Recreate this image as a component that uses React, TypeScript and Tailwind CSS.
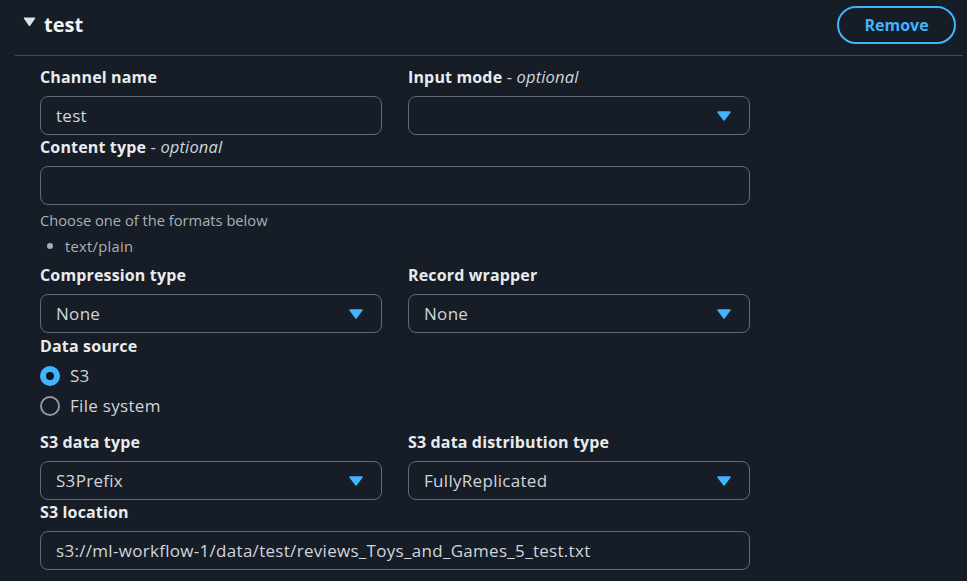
import React from 'react';

type Option = { value: string };

function Label({ text, optional }: { text: string; optional?: boolean }) {
    return (
        <div className="h-[22px] text-[16px] leading-[22px] font-bold tracking-[0.15px] text-[#e9ebed]">
            {text}
            {optional && (
                <span className="text-[16.5px] font-normal text-[#d1d5db]">
                    {' - '}
                    <i>optional</i>
                </span>
            )}
        </div>
    );
}

function Caret() {
    return (
        <svg width="14" height="10" viewBox="0 0 14 10" className="shrink-0">
            <path d="M1 1 L13 1 L7 9 Z" fill="#42b4ff" stroke="#42b4ff" strokeWidth="1.5" strokeLinejoin="round" />
        </svg>
    );
}

function TextInput({ value }: { value?: string }) {
    return (
        <div className="mt-[8px] flex h-[39px] items-center rounded-[8px] border border-[#5f6b7a] px-[15px] text-[17px] tracking-[0.3px] text-[#d1d5db]">
            {value}
        </div>
    );
}

function Select({ value }: { value?: string }) {
    return (
        <div className="mt-[8px] flex h-[39px] items-center justify-between rounded-[8px] border border-[#5f6b7a] pl-[15px] pr-[18px] text-[17px] tracking-[0.3px] text-[#d1d5db]">
            <span>{value}</span>
            <Caret />
        </div>
    );
}

function Radio({ label, checked }: { label: string; checked?: boolean }) {
    return (
        <div className="flex h-[30px] items-center gap-[10px]">
            {checked ? (
                <span className="flex h-[20px] w-[20px] items-center justify-center rounded-full bg-[#42b4ff]">
                    <span className="h-[8px] w-[8px] rounded-full bg-[#0f141a]" />
                </span>
            ) : (
                <span className="h-[20px] w-[20px] rounded-full border-2 border-[#8d99a8]" />
            )}
            <span className="text-[17px] tracking-[0.3px] text-[#d1d5db]">{label}</span>
        </div>
    );
}

const formats: Option[] = [{ value: 'text/plain' }];

export default function App() {
    return (
        <div
            className="min-h-screen w-full bg-[#161d26]"
            style={{ fontFamily: '"Open Sans", "Noto Sans", sans-serif' }}
        >
            <div className="flex items-center justify-between pl-[23px] pr-[11px] pt-[6px]">
                <div className="flex items-center gap-[8px]">
                    <svg width="13" height="10" viewBox="0 0 13 10" className="-mt-[6px]">
                        <path d="M1 1 L12 1 L6.5 9 Z" fill="#dfe3e8" stroke="#dfe3e8" strokeWidth="1" strokeLinejoin="round" />
                    </svg>
                    <h2 className="text-[20px] font-bold leading-[38px] text-[#f3f4f6]">test</h2>
                </div>
                <button className="h-[38px] w-[119px] rounded-full border-2 border-[#42b4ff] text-[16px] font-bold text-[#42b4ff]">
                    Remove
                </button>
            </div>

            <div className="ml-[15px] mr-[4px] mt-[11px] h-px bg-[#414d5c]" />

            <div className="w-[750px] pl-[40px] pt-[10px]">
                <div className="grid grid-cols-2 gap-x-[26px]">
                    <div>
                        <Label text="Channel name" />
                        <TextInput value="test" />
                    </div>
                    <div>
                        <Label text="Input mode" optional />
                        <Select />
                    </div>
                </div>

                <div className="mt-[1px]">
                    <Label text="Content type" optional />
                    <TextInput />
                    <div className="mt-[5px] text-[14.7px] leading-[20px] text-[#a9b0b9]">Choose one of the formats below</div>
                    <ul className="mt-[6px]">
                        {formats.map((f) => (
                            <li key={f.value} className="flex items-center text-[14.7px] leading-[20px] tracking-[0.3px] text-[#a9b0b9]">
                                <span className="ml-[7px] mr-[12px] h-[6px] w-[6px] rounded-full bg-[#a9b0b9]" />
                                {f.value}
                            </li>
                        ))}
                    </ul>
                </div>

                <div className="mt-[8px] grid grid-cols-2 gap-x-[26px]">
                    <div>
                        <Label text="Compression type" />
                        <Select value="None" />
                    </div>
                    <div>
                        <Label text="Record wrapper" />
                        <Select value="None" />
                    </div>
                </div>

                <div className="mt-[2px]">
                    <Label text="Data source" />
                    <div className="mt-[4px]">
                        <Radio label="S3" checked />
                        <Radio label="File system" />
                    </div>
                </div>

                <div className="mt-[10px] grid grid-cols-2 gap-x-[26px]">
                    <div>
                        <Label text="S3 data type" />
                        <Select value="S3Prefix" />
                    </div>
                    <div>
                        <Label text="S3 data distribution type" />
                        <Select value="FullyReplicated" />
                    </div>
                </div>

                <div className="mt-[1px]">
                    <Label text="S3 location" />
                    <TextInput value="s3://ml-workflow-1/data/test/reviews_Toys_and_Games_5_test.txt" />
                </div>
            </div>
        </div>
    );
}
